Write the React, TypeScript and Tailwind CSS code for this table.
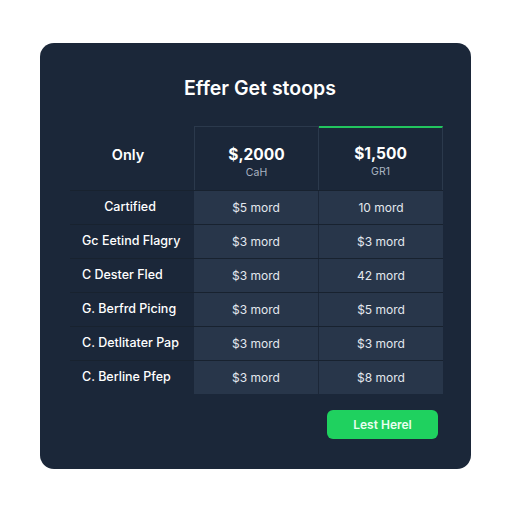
import React from 'react';

const ROWS = [
    { label: 'Cartified', a: '$5 mord', b: '10 mord', center: true },
    { label: 'Gc Eetind Flagry', a: '$3 mord', b: '$3 mord' },
    { label: 'C Dester Fled', a: '$3 mord', b: '42 mord' },
    { label: 'G. Berfrd Picing', a: '$3 mord', b: '$5 mord' },
    { label: 'C. Detlitater Pap', a: '$3 mord', b: '$3 mord' },
    { label: 'C. Berline Pfep', a: '$3 mord', b: '$8 mord' },
];

export default function App() {
    return (
        <div className="w-[512px] h-[512px] bg-white pt-[43px] pl-[40px] font-['Inter',sans-serif]">
            <div className="w-[431px] h-[426px] bg-[#1b2739] rounded-[14px] flex flex-col">
                {/* Title */}
                <h1 className="text-center text-white text-[19.5px] leading-[28px] font-semibold mt-[31px] pl-[9px]">
                    Effer Get stoops
                </h1>

                {/* Table */}
                <div className="ml-[30px] mt-[24px] w-[373px] flex flex-col">
                    <div className="grid grid-cols-[124px_125px_124px] h-[64px]">
                        <div className="flex items-center justify-center pb-[6px] pr-[8px] text-white text-[14.5px] font-semibold">Only</div>
                        <div className="flex flex-col items-center pt-[18px] border border-[#2b394c] border-b-0">
                            <span className="text-white text-[15.5px] font-bold leading-[20px]">$,2000</span>
                            <span className="text-[#aab4c2] text-[10.5px] leading-[15px]">CaH</span>
                        </div>
                        <div className="flex flex-col items-center pt-[16px] border border-[#2b394c] border-t-2 border-t-[#22c55e] border-l-0 border-b-0">
                            <span className="text-white text-[15.5px] font-bold leading-[20px]">$1,500</span>
                            <span className="text-[#aab4c2] text-[10.5px] leading-[15px]">GR1</span>
                        </div>
                    </div>
                    {ROWS.map((row, i) => (
                        <div
                            key={i}
                            className="grid grid-cols-[124px_125px_124px] h-[34px] border-t border-[#18222f]"
                        >
                            <div
                                className={
                                    row.center
                                        ? 'flex items-center justify-center pr-[4px] text-white text-[12.5px] font-medium'
                                        : 'flex items-center pl-[12px] text-white text-[12.5px] font-medium'
                                }
                            >
                                {row.label}
                            </div>
                            <div className="flex items-center justify-center bg-[#28364a] text-[#e3e8ee] text-[12px] border-r border-[#1c2738]">
                                {row.a}
                            </div>
                            <div className="flex items-center justify-center bg-[#28364a] text-[#e3e8ee] text-[12px]">
                                {row.b}
                            </div>
                        </div>
                    ))}
                </div>

                {/* Action */}
                <div className="flex justify-end mt-[16px] mr-[33px]">
                    <button className="w-[111px] h-[29px] rounded-[6px] bg-[#1fd15f] text-[#eafff0] text-[12px] font-semibold">
                        Lest Herel
                    </button>
                </div>
            </div>
        </div>
    );
}
